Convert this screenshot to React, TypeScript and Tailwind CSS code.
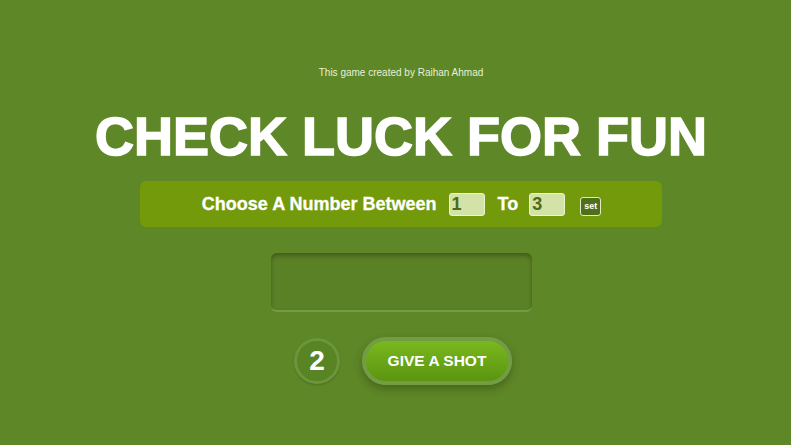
import React from 'react';

export default function App() {
  return (
    <div className="min-h-[445px] w-full bg-[#5e8727] font-['Liberation_Sans',Arial,sans-serif] text-white">
      <div className="flex flex-col items-center pl-[11px] pt-[67px]">
        <p className="text-[10px] leading-[12px] text-[#e8efd8]">This game created by Raihan Ahmad</p>

        <h1 className="mt-[30px] text-[54px] font-bold leading-[54px] [-webkit-text-stroke:1.5px_white]">CHECK LUCK FOR FUN</h1>

        <div className="mt-[18px] flex h-[46px] w-[522px] items-center justify-center rounded-[6px] bg-[#739a0b] pl-[1px]">
          <span className="text-[18px] font-bold [-webkit-text-stroke:0.3px_white]">Choose A Number Between</span>
          <input
            defaultValue="1"
            className="ml-[12px] h-[23px] w-[36px] rounded-[3px] border border-[#eef4d0] bg-[#d3e2a6] px-[2px] text-[18px] font-bold text-[#4d6d12] outline-none"
          />
          <span className="ml-[13px] text-[18px] font-bold [-webkit-text-stroke:0.3px_white]">To</span>
          <input
            defaultValue="3"
            className="ml-[11px] h-[23px] w-[36px] rounded-[3px] border border-[#eef4d0] bg-[#d3e2a6] px-[2px] text-[18px] font-bold text-[#4d6d12] outline-none"
          />
          <button className="ml-[15px] mt-[4px] flex h-[19px] w-[21px] items-center justify-center rounded-[3px] border border-[#dfe9c4] bg-[#4f7018] text-[9px] font-bold leading-none">
            set
          </button>
        </div>

        <div className="mt-[26px] h-[59px] w-[261px] rounded-[6px] border-b-2 border-[#739c46] bg-[#5b8126] shadow-[inset_0_3px_4px_rgba(0,0,0,0.28)]" />

        <div className="mt-[25px] flex items-center gap-[22px] pl-[4px]">
          <div className="flex h-[46px] w-[46px] items-center justify-center rounded-full border-[3px] border-[#6b963a] bg-[#588424] text-[28px] font-bold shadow-[0_1px_2px_rgba(0,0,0,0.2)]">
            2
          </div>
          <button className="flex h-[48px] w-[150px] items-center justify-center rounded-full border-[4px] border-[#729d45] bg-gradient-to-b from-[#7ab81f] to-[#5b9510] text-[15.5px] font-bold shadow-[0_4px_8px_rgba(0,0,0,0.25)]">
            GIVE A SHOT
          </button>
        </div>
      </div>
    </div>
  );
}
